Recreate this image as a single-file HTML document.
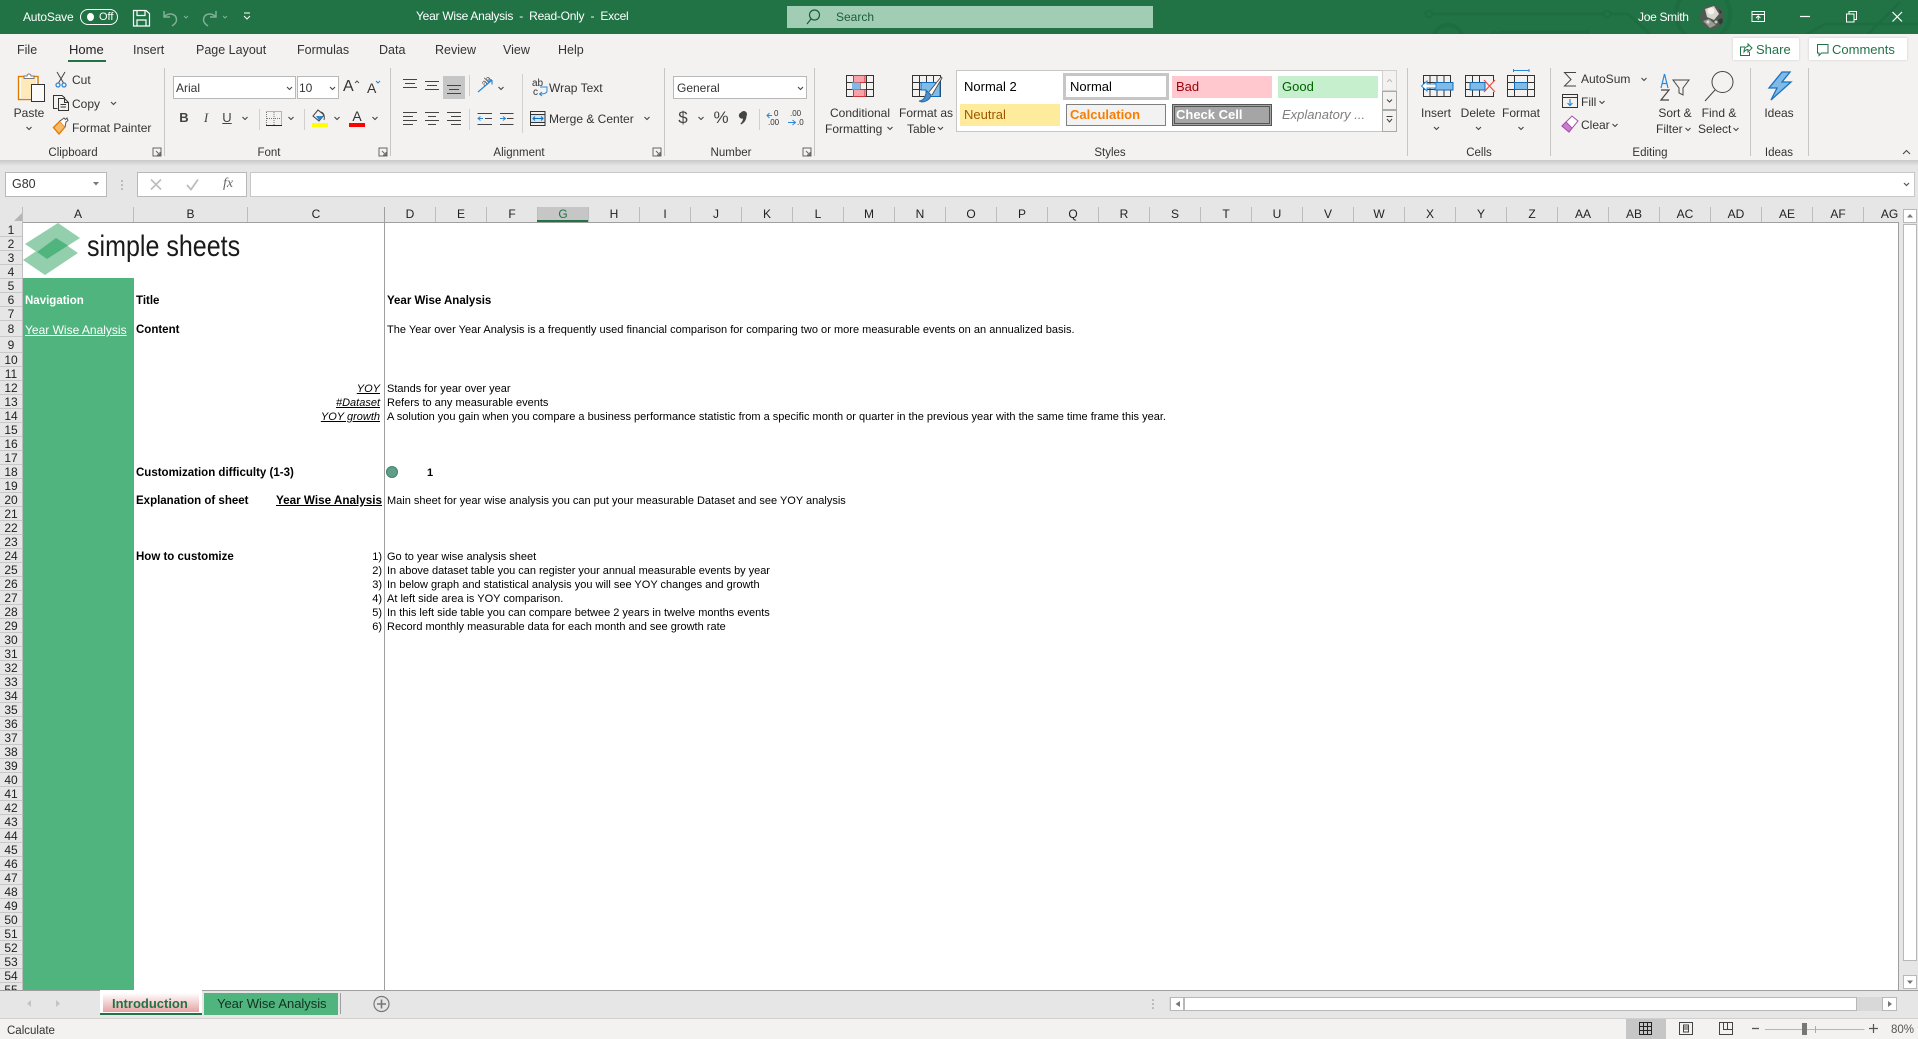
<!DOCTYPE html>
<html lang="en"><head><meta charset="utf-8"><title>Year Wise Analysis - Excel</title>
<style>
html,body{margin:0;padding:0}
body{width:1918px;height:1039px;overflow:hidden;position:relative;background:#fff;font-family:"Liberation Sans",sans-serif;font-size:12px;color:#333}
div,span.a{position:absolute}
.t{position:absolute;white-space:nowrap;line-height:14px;height:14px}
.c{transform:translateX(-50%)}
.r{transform:translateX(-100%)}
.s{font-size:11px;color:#000}
.b{font-weight:bold;font-size:11.5px}
.u{text-decoration:underline}
.m{font-size:12.5px}
.ch{top:207px;height:15px;line-height:15px;text-align:center;font-size:12px;color:#222;width:51px;border-right:1px solid #bdbdbd;box-sizing:border-box;}
.rh{left:0;width:22px;text-align:center;font-size:12px;line-height:14px;height:14px;color:#222;border-bottom:1px solid #c8c8c8;box-sizing:border-box}
.sep{width:1px;background:#c8c6c4;top:68px;height:88px}
.sep2{width:1px;background:#d2d0ce;top:109px;height:21px}
.box{background:#fff;border:1px solid #b8b8b8;box-sizing:border-box}
.st{position:absolute;box-sizing:border-box;font-size:13px;line-height:22px;padding-left:4px;white-space:nowrap;overflow:hidden}
</style></head><body>

<!-- title bar -->
<div style="left:0;top:0;width:1918px;height:34px;background:#217346"></div>
<svg style="position:absolute;left:0;top:0" width="1918" height="34" fill="none" stroke="#1e6c41">
<path stroke-width="3" d="M1432 14H1604M1610 14H1628L1650 34M1807 34L1825 24H1918M1868 34L1900 2"/>
<circle cx="1429" cy="14" r="3.5" stroke-width="2"/><circle cx="1607" cy="14" r="3.5" stroke-width="2"/>
<circle cx="1703" cy="14" r="27" stroke-width="4"/><circle cx="1448" cy="40" r="15" stroke-width="4"/><circle cx="1495" cy="36" r="4" stroke-width="2"/>
<path stroke-width="3" d="M1499 32H1590"/>
</svg>
<span class="t" style="left:23px;top:10px;color:#fff;letter-spacing:-.2px">AutoSave</span>
<div style="left:80px;top:9px;width:38px;height:16px;border:1.5px solid #fff;border-radius:9px;box-sizing:border-box"></div>
<div style="left:87px;top:13px;width:7px;height:8px;border-radius:50%;background:#fff"></div>
<span class="t" style="left:99px;top:10px;color:#fff;font-size:11px">Off</span>
<span class="t" style="left:416px;top:9px;color:#fff;white-space:pre;letter-spacing:-.25px">Year Wise Analysis  -  Read-Only  -  Excel</span>
<div style="left:787px;top:6px;width:366px;height:22px;background:#a0cdb4"></div>
<span class="t" style="left:836px;top:10px;color:#1d5c39;font-size:12px">Search</span>
<span class="t" style="left:1638px;top:10px;color:#fff;letter-spacing:-.3px">Joe Smith</span>

<!-- ribbon -->
<div style="left:0;top:34px;width:1918px;height:126px;background:#f3f2f1"></div>
<span class="t m" style="left:17px;top:43px">File</span>
<span class="t" style="left:69px;top:43px;color:#222;font-size:13px">Home</span>
<div style="left:68px;top:60px;width:38px;height:2px;background:#217346"></div>
<span class="t m" style="left:133px;top:43px">Insert</span>
<span class="t m" style="left:196px;top:43px">Page Layout</span>
<span class="t m" style="left:297px;top:43px">Formulas</span>
<span class="t m" style="left:379px;top:43px">Data</span>
<span class="t m" style="left:435px;top:43px">Review</span>
<span class="t m" style="left:503px;top:43px">View</span>
<span class="t m" style="left:558px;top:43px">Help</span>
<div style="left:1733px;top:38px;width:66px;height:22px;background:#fff;box-shadow:0 0 2px #c8c6c4"></div>
<span class="t" style="left:1756px;top:43px;color:#217346;font-size:13px">Share</span>
<div style="left:1809px;top:38px;width:98px;height:22px;background:#fff;box-shadow:0 0 2px #c8c6c4"></div>
<span class="t" style="left:1832px;top:43px;color:#217346;font-size:13px">Comments</span>

<!-- separators -->
<div class="sep" style="left:164px"></div><div class="sep" style="left:390px"></div><div class="sep" style="left:664px"></div><div class="sep" style="left:814px"></div><div class="sep" style="left:1407px"></div><div class="sep" style="left:1550px"></div><div class="sep" style="left:1750px"></div><div class="sep" style="left:1808px"></div>
<div class="sep2" style="left:259px"></div><div class="sep2" style="left:304px"></div><div class="sep2" style="left:469px"></div><div class="sep2" style="left:469px;top:75px"></div><div class="sep2" style="left:522px;top:74px;height:59px"></div><div class="sep2" style="left:759px"></div>

<!-- clipboard -->
<span class="t c" style="left:29px;top:106px">Paste</span>
<span class="t" style="left:72px;top:73px">Cut</span>
<span class="t" style="left:72px;top:97px">Copy</span>
<span class="t" style="left:72px;top:121px">Format Painter</span>
<span class="t c" style="left:73px;top:146px;font-size:11.5px">Clipboard</span>
<!-- font -->
<div class="box" style="left:173px;top:76px;width:123px;height:23px"></div>
<span class="t" style="left:176px;top:81px">Arial</span>
<div class="box" style="left:297px;top:76px;width:42px;height:23px"></div>
<span class="t" style="left:299px;top:81px">10</span>
<span class="t" style="left:343px;top:79px;font-size:16px;line-height:16px;height:16px">A</span>
<span class="t" style="left:367px;top:81px;font-size:14px">A</span>
<span class="t c" style="left:184px;top:111px;font-size:13px;font-weight:bold;color:#444">B</span>
<span class="t c" style="left:206px;top:111px;font-size:13px;font-style:italic;font-family:'Liberation Serif',serif;color:#444">I</span>
<span class="t c" style="left:227px;top:111px;font-size:13px;color:#444;text-decoration:underline">U</span>
<span class="t c" style="left:357px;top:109px;font-size:14px;color:#333">A</span>
<span class="t c" style="left:269px;top:146px;font-size:11.5px">Font</span>
<!-- alignment -->
<div style="left:443px;top:76px;width:22px;height:23px;background:#c6c6c6"></div>
<span class="t" style="left:481px;top:74px;font-size:9px;color:#555;transform:rotate(-45deg)">ab</span>
<span class="t" style="left:549px;top:81px">Wrap Text</span>
<span class="t" style="left:549px;top:112px">Merge &amp; Center</span>
<span class="t" style="left:532px;top:79px;font-size:10px;line-height:9px">ab</span>
<span class="t" style="left:533px;top:88px;font-size:10px;line-height:9px">c</span>
<span class="t c" style="left:519px;top:146px;font-size:11.5px">Alignment</span>
<!-- number -->
<div class="box" style="left:673px;top:76px;width:134px;height:23px"></div>
<span class="t" style="left:677px;top:81px">General</span>
<span class="t c" style="left:683px;top:109px;font-size:17px;line-height:18px;height:18px;color:#444">$</span>
<span class="t c" style="left:721px;top:109px;font-size:17px;line-height:18px;height:18px;color:#444">%</span>
<span class="t" style="left:774px;top:109px;font-size:8px;line-height:9px">0</span>
<span class="t" style="left:768px;top:118px;font-size:8px;line-height:9px">.00</span>
<span class="t" style="left:790px;top:109px;font-size:8px;line-height:9px">.00</span>
<span class="t" style="left:797px;top:118px;font-size:8px;line-height:9px">.0</span>
<span class="t c" style="left:731px;top:146px;font-size:11.5px">Number</span>
<!-- styles big buttons -->
<span class="t c" style="left:860px;top:106px">Conditional</span>
<span class="t" style="left:825px;top:122px">Formatting</span>
<span class="t c" style="left:926px;top:106px">Format as</span>
<span class="t" style="left:907px;top:122px">Table</span>
<span class="t c" style="left:1110px;top:146px;font-size:11.5px">Styles</span>
<!-- gallery -->
<div style="left:956px;top:70px;width:441px;height:62px;background:#fff;border:1px solid #c8c6c4;box-sizing:border-box"></div>
<div class="st" style="left:960px;top:76px;width:100px;height:22px;color:#000">Normal 2</div>
<div class="st" style="left:1063px;top:73px;width:106px;height:27px;border:3px solid #c6c6c6;color:#000;line-height:21px;padding-left:4px">Normal</div>
<div class="st" style="left:1172px;top:76px;width:100px;height:22px;background:#ffc7ce;color:#9c0006">Bad</div>
<div class="st" style="left:1278px;top:76px;width:100px;height:22px;background:#c6efce;color:#006100">Good</div>
<div class="st" style="left:960px;top:104px;width:100px;height:22px;background:#ffeb9c;color:#9c5700">Neutral</div>
<div class="st" style="left:1066px;top:104px;width:100px;height:22px;background:#f2f2f2;border:1px solid #7f7f7f;color:#fa7d00;font-weight:bold;line-height:20px;padding-left:3px">Calculation</div>
<div class="st" style="left:1172px;top:104px;width:100px;height:22px;background:#a5a5a5;border:3px double #555;color:#fff;font-weight:bold;line-height:16px;padding-left:1px">Check Cell</div>
<div class="st" style="left:1278px;top:104px;width:100px;height:22px;color:#7f7f7f;font-style:italic">Explanatory ...</div>
<div style="left:1382px;top:70px;width:15px;height:21px;background:#f3f2f1;border:1px solid #d2d0ce;box-sizing:border-box"></div>
<div style="left:1382px;top:91px;width:15px;height:19px;background:#f3f2f1;border:1px solid #aaa;box-sizing:border-box"></div>
<div style="left:1382px;top:110px;width:15px;height:22px;background:#f3f2f1;border:1px solid #aaa;box-sizing:border-box"></div>
<!-- cells -->
<span class="t c" style="left:1436px;top:106px">Insert</span>
<span class="t c" style="left:1478px;top:106px">Delete</span>
<span class="t c" style="left:1521px;top:106px">Format</span>
<span class="t c" style="left:1479px;top:146px;font-size:11.5px">Cells</span>
<!-- editing -->
<span class="t" style="left:1581px;top:72px">AutoSum</span>
<span class="t" style="left:1581px;top:95px">Fill</span>
<span class="t" style="left:1581px;top:118px">Clear</span>
<span class="t c" style="left:1675px;top:106px">Sort &amp;</span>
<span class="t" style="left:1656px;top:122px">Filter</span>
<span class="t c" style="left:1719px;top:106px">Find &amp;</span>
<span class="t" style="left:1698px;top:122px">Select</span>
<span class="t c" style="left:1650px;top:146px;font-size:11.5px">Editing</span>
<span class="t c" style="left:1779px;top:106px">Ideas</span>
<span class="t c" style="left:1779px;top:146px;font-size:11.5px">Ideas</span>

<!-- shadow + formula bar -->
<div style="left:0;top:160px;width:1918px;height:47px;background:#e6e6e6"></div>
<div style="left:0;top:160px;width:1918px;height:6px;background:linear-gradient(#c9c9c9,#e6e6e6)"></div>
<div class="box" style="left:5px;top:172px;width:102px;height:25px;background:#fff"></div>
<span class="t" style="left:12px;top:177px;font-size:12.5px">G80</span>
<div class="box" style="left:137px;top:172px;width:110px;height:25px"></div>
<div class="box" style="left:250px;top:172px;width:1665px;height:25px;border-color:#c8c8c8"></div>
<span class="t c" style="left:228px;top:176px;font-style:italic;font-family:'Liberation Serif',serif;font-size:14px;line-height:16px;color:#666">fx</span>

<!-- column header band -->
<div style="left:0;top:207px;width:1918px;height:15px;background:#e6e6e6"></div>
<div style="left:537px;top:207px;width:51px;height:15px;background:#c6c6c6"></div>
<div class="ch" style="left:23px;width:111px">A</div>
<div class="ch" style="left:134px;width:114px">B</div>
<div class="ch" style="left:248px;width:137px">C</div>
<div class="ch" style="left:385px">D</div><div class="ch" style="left:436px">E</div><div class="ch" style="left:487px">F</div><div class="ch" style="left:538px;color:#217346">G</div><div class="ch" style="left:589px">H</div><div class="ch" style="left:640px">I</div><div class="ch" style="left:691px">J</div><div class="ch" style="left:742px">K</div><div class="ch" style="left:793px">L</div><div class="ch" style="left:844px">M</div><div class="ch" style="left:895px">N</div><div class="ch" style="left:946px">O</div><div class="ch" style="left:997px">P</div><div class="ch" style="left:1048px">Q</div><div class="ch" style="left:1099px">R</div><div class="ch" style="left:1150px">S</div><div class="ch" style="left:1201px">T</div><div class="ch" style="left:1252px">U</div><div class="ch" style="left:1303px">V</div><div class="ch" style="left:1354px">W</div><div class="ch" style="left:1405px">X</div><div class="ch" style="left:1456px">Y</div><div class="ch" style="left:1507px">Z</div><div class="ch" style="left:1558px">AA</div><div class="ch" style="left:1609px">AB</div><div class="ch" style="left:1660px">AC</div><div class="ch" style="left:1711px">AD</div><div class="ch" style="left:1762px">AE</div><div class="ch" style="left:1813px">AF</div><div class="ch" style="left:1864px;border:0">AG</div>
<div style="left:537px;top:220px;width:51px;height:2px;background:#217346"></div>
<div style="left:0;top:222px;width:1898px;height:1px;background:#9f9f9f"></div>

<!-- row headers -->
<div style="left:0;top:222px;width:22px;height:768px;background:#e6e6e6"></div>
<div style="left:22px;top:207px;width:1px;height:783px;background:#bdbdbd"></div>
<div class="rh" style="top:223px">1</div><div class="rh" style="top:237px">2</div><div class="rh" style="top:251px">3</div><div class="rh" style="top:265px">4</div><div class="rh" style="top:279px">5</div><div class="rh" style="top:293px">6</div><div class="rh" style="top:307px">7</div><div class="rh" style="top:321px;height:16px;line-height:16px">8</div><div class="rh" style="top:337px;height:16px;line-height:16px">9</div><div class="rh" style="top:353px">10</div><div class="rh" style="top:367px">11</div><div class="rh" style="top:381px">12</div><div class="rh" style="top:395px">13</div><div class="rh" style="top:409px">14</div><div class="rh" style="top:423px">15</div><div class="rh" style="top:437px">16</div><div class="rh" style="top:451px">17</div><div class="rh" style="top:465px">18</div><div class="rh" style="top:479px">19</div><div class="rh" style="top:493px">20</div><div class="rh" style="top:507px">21</div><div class="rh" style="top:521px">22</div><div class="rh" style="top:535px">23</div><div class="rh" style="top:549px">24</div><div class="rh" style="top:563px">25</div><div class="rh" style="top:577px">26</div><div class="rh" style="top:591px">27</div><div class="rh" style="top:605px">28</div><div class="rh" style="top:619px">29</div><div class="rh" style="top:633px">30</div><div class="rh" style="top:647px">31</div><div class="rh" style="top:661px">32</div><div class="rh" style="top:675px">33</div><div class="rh" style="top:689px">34</div><div class="rh" style="top:703px">35</div><div class="rh" style="top:717px">36</div><div class="rh" style="top:731px">37</div><div class="rh" style="top:745px">38</div><div class="rh" style="top:759px">39</div><div class="rh" style="top:773px">40</div><div class="rh" style="top:787px">41</div><div class="rh" style="top:801px">42</div><div class="rh" style="top:815px">43</div><div class="rh" style="top:829px">44</div><div class="rh" style="top:843px">45</div><div class="rh" style="top:857px">46</div><div class="rh" style="top:871px">47</div><div class="rh" style="top:885px">48</div><div class="rh" style="top:899px">49</div><div class="rh" style="top:913px">50</div><div class="rh" style="top:927px">51</div><div class="rh" style="top:941px">52</div><div class="rh" style="top:955px">53</div><div class="rh" style="top:969px">54</div><div class="rh" style="top:983px;height:7px;overflow:hidden;border:0">55</div>

<!-- sheet -->
<div style="left:23px;top:278px;width:111px;height:712px;background:#4fb47e"></div>
<div style="left:384px;top:207px;width:1px;height:783px;background:#9f9f9f"></div>
<div style="left:1898px;top:222px;width:1px;height:768px;background:#9f9f9f"></div>
<svg style="position:absolute;left:0;top:0" width="90" height="282">
<polygon points="25,244 58,223 80,238 47,259" fill="#93cfac"/>
<polygon points="23,260 56,238 78,253 45,275" fill="#93cfac"/>
<polygon points="37,252 56,238 68,245.5 47,259" fill="#4fb47e"/>
</svg>
<span class="t" style="left:87px;top:229px;height:36px;line-height:36px;font-size:30px;color:#1a1a1a;transform:scaleX(.835);transform-origin:0 0">simple sheets</span>

<span class="t s b" style="left:25px;top:294px;color:#fff">Navigation</span>
<span class="t s u" style="left:25px;top:323px;color:#fff;font-size:12px">Year Wise Analysis</span>
<span class="t s b" style="left:136px;top:294px">Title</span>
<span class="t s b" style="left:136px;top:323px">Content</span>
<span class="t s b" style="left:136px;top:466px">Customization difficulty (1-3)</span>
<span class="t s b" style="left:136px;top:494px">Explanation of sheet</span>
<span class="t s b" style="left:136px;top:550px">How to customize</span>
<span class="t s b" style="left:387px;top:294px">Year Wise Analysis</span>
<span class="t s" style="left:387px;top:323px;letter-spacing:.02px">The Year over Year Analysis is a frequently used financial comparison for comparing two or more measurable events on an annualized basis.</span>
<span class="t s u r" style="left:380px;top:382px;font-style:italic">YOY</span>
<span class="t s u r" style="left:380px;top:396px;font-style:italic">#Dataset</span>
<span class="t s u r" style="left:380px;top:410px;font-style:italic">YOY growth</span>
<span class="t s" style="left:387px;top:382px">Stands for year over year</span>
<span class="t s" style="left:387px;top:396px">Refers to any measurable events</span>
<span class="t s" style="left:387px;top:410px">A solution you gain when you compare a business performance statistic from a specific month or quarter in the previous year with the same time frame this year.</span>
<div style="left:386px;top:466px;width:12px;height:12px;border-radius:50%;background:#5f9e88;border:1px solid #41836d;box-sizing:border-box"></div>
<span class="t s c" style="left:430px;top:466px;font-weight:bold">1</span>
<span class="t s b u r" style="left:382px;top:494px;font-size:11.7px">Year Wise Analysis</span>
<span class="t s" style="left:387px;top:494px">Main sheet for year wise analysis you can put your measurable Dataset and see YOY analysis</span>
<span class="t s r" style="left:382px;top:550px">1)</span><span class="t s" style="left:387px;top:550px">Go to year wise analysis sheet</span>
<span class="t s r" style="left:382px;top:564px">2)</span><span class="t s" style="left:387px;top:564px;letter-spacing:-.03px">In above dataset table you can register your annual measurable events by year</span>
<span class="t s r" style="left:382px;top:578px">3)</span><span class="t s" style="left:387px;top:578px">In below graph and statistical analysis you will see YOY changes and growth</span>
<span class="t s r" style="left:382px;top:592px">4)</span><span class="t s" style="left:387px;top:592px">At left side area is YOY comparison.</span>
<span class="t s r" style="left:382px;top:606px">5)</span><span class="t s" style="left:387px;top:606px">In this left side table you can compare betwee 2 years in twelve months events</span>
<span class="t s r" style="left:382px;top:620px">6)</span><span class="t s" style="left:387px;top:620px">Record monthly measurable data for each month and see growth rate</span>

<!-- v scrollbar -->
<div style="left:1899px;top:207px;width:19px;height:783px;background:#e6e6e6"></div>
<div class="box" style="left:1903px;top:209px;width:14px;height:14px"></div>
<div class="box" style="left:1903px;top:224px;width:14px;height:737px"></div>
<div class="box" style="left:1903px;top:975px;width:14px;height:14px"></div>

<!-- tab bar -->
<div style="left:0;top:990px;width:1918px;height:28px;background:#e6e6e6;border-top:1px solid #9f9f9f;box-sizing:border-box"></div>
<div style="left:100px;top:990px;width:102px;height:25px;background:#fff"></div>
<div style="left:103px;top:993px;width:96px;height:19px;background:linear-gradient(#fff,#e6a3a3)"></div>
<div style="left:100px;top:1013px;width:102px;height:2px;background:#217346"></div>
<span class="t" style="left:112px;top:997px;color:#217346;font-size:13px;font-weight:bold">Introduction</span>
<div style="left:204px;top:993px;width:134px;height:22px;background:#4fb47e"></div>
<span class="t" style="left:217px;top:997px;color:#12331f;font-size:13px;letter-spacing:-.03px">Year Wise Analysis</span>
<div style="left:340px;top:993px;width:1px;height:21px;background:#9f9f9f"></div>
<div style="left:1169px;top:997px;width:728px;height:14px;background:#d8d8d8"></div>
<div class="box" style="left:1170px;top:997px;width:14px;height:14px"></div>
<div class="box" style="left:1184px;top:997px;width:673px;height:14px"></div>
<div class="box" style="left:1882px;top:997px;width:15px;height:14px"></div>

<!-- status bar -->
<div style="left:0;top:1018px;width:1918px;height:21px;background:#f3f2f1;border-top:1px solid #d2d0ce;box-sizing:border-box"></div>
<span class="t" style="left:7px;top:1024px;font-size:11.5px">Calculate</span>
<div style="left:1626px;top:1019px;width:40px;height:20px;background:#c6c6c6"></div>
<span class="t" style="left:1891px;top:1023px;font-size:11.5px;color:#555">80%</span>

<!-- icons overlay -->
<svg style="position:absolute;left:0;top:0;pointer-events:none" width="1918" height="1039" fill="none" stroke="#444" stroke-width="1">
<defs><path id="c" d="M-2.5 -1L0 1.5L2.5 -1" stroke="#444" stroke-width="1.1" fill="none"/>
<g id="l" stroke="#666" fill="none"><rect x="-4" y="-4" width="8" height="8"/><path d="M-1 -1L3 3M0 3H3V0" stroke-width="1"/></g></defs>

<!-- QAT -->
<g stroke="#fff" stroke-width="1.2"><path d="M133.5 10.5H146L149.5 13.5V26H133.5ZM137 10.5V15.5H145V10.5M137 26V20H146V26"/></g>
<g stroke="#7fb095" stroke-width="1.5"><path d="M164 11V17H170M164.5 16.5C168 12.5 176.5 13 176.5 20C176.5 22 175 24 172 26"/><path d="M216 11V17H210M215.5 16.5C212 12.5 203.5 13 203.5 20C203.5 22 205 24 208 26"/><path d="M184 16l2 2l2 -2M223 16l2 2l2 -2" stroke-width="1"/></g>
<path d="M244 13H250M244 16L247 19L250 16" stroke="#fff"/>
<!-- search icon -->
<circle cx="814.5" cy="15" r="5" stroke="#1d5c39" stroke-width="1.2"/><path d="M811 19L807 24" stroke="#1d5c39" stroke-width="1.2"/>
<!-- avatar -->
<circle cx="1712" cy="17" r="12" fill="#4e5a50" stroke="none"/><path d="M1705 9L1714 6L1719 14L1714 20L1707 17Z" fill="#d9d5cf" stroke="none"/><circle cx="1711" cy="11" r="3.5" fill="#f4f1ea" stroke="none"/><path d="M1703 21L1709 19L1716 25L1710 28Z" fill="#9a9c92" stroke="none"/><path d="M1718 20l4 -2l1 4l-3 3zM1719 9l3 3l-2 2z" fill="#2f3a32" stroke="none"/><circle cx="1708" cy="22" r="1.5" fill="#ddd" stroke="none"/><circle cx="1716" cy="22" r="1.5" fill="#c9c9bd" stroke="none"/>
<!-- window buttons -->
<g stroke="#fff"><path d="M1752 11.5H1764.5V21.5H1752ZM1752 14.5H1764.5M1758.2 20V16M1756 18L1758.2 15.8L1760.4 18"/><path d="M1800 16.5H1810" stroke-width="1.2"/><path d="M1846.5 14H1854V22H1846.5ZM1849 14V11.5H1856.5V19.5H1854"/><path d="M1892.5 12L1902 21.5M1902 12L1892.5 21.5" stroke-width="1.2"/></g>
<!-- share comments -->
<g stroke="#217346"><path d="M1745 47H1740.5V55.5H1749.5V52"/><path d="M1744 52C1744 48 1746 46.500 1748 46.500V44L1752 48L1748 52V49.500C1746.500 49.500 1745 50.500 1744 52Z"/><path d="M1817.500 44.500H1828V53H1821.500L1819 55.500V53H1817.500Z"/></g>

<!-- paste -->
<rect x="18.5" y="76.5" width="19.5" height="23" fill="#fff" stroke="#e07b00" stroke-width="1.4"/><path d="M21 78H36V98H21Z" fill="#ffe9b8" stroke="none"/>
<path d="M24 78.5V76H27A2 2 0 0 1 31 76H34V78.5Z" fill="#fff" stroke="#777"/>
<rect x="31.5" y="84.5" width="13" height="17" fill="#fafafa" stroke="#333"/>
<!-- cut -->
<path d="M57 72L63.5 83M65 72L58.5 83" stroke="#444"/><circle cx="58" cy="85" r="2" stroke="#2b88d8" stroke-width="1.3"/><circle cx="64" cy="85" r="2" stroke="#2b88d8" stroke-width="1.3"/>
<!-- copy -->
<path d="M57.5 108.5H53.5V95.5H62L65 98M58.5 98.5H64.5L68.5 102.5V110.5H58.5ZM64.5 98.5V102.5H68.5M60.5 104.5H66M60.5 107H66" stroke="#333"/>
<!-- painter -->
<path d="M53.5 127.5L60 121L65 127L59 134Z" fill="#f6ba6b" stroke="#e07b00" stroke-width="1.3"/><path d="M60 121L64 118L65.5 119.5L67 118L68 120.5L66 122L65 127" fill="#fff" stroke="#555"/>
<use href="#c" x="29" y="128"/><use href="#c" x="113.5" y="103"/>
<use href="#l" x="157" y="152"/><use href="#l" x="383" y="152"/><use href="#l" x="657" y="152"/><use href="#l" x="807" y="152"/>

<!-- font -->
<use href="#c" x="289.5" y="88"/><use href="#c" x="332.5" y="88"/>
<path d="M355 83L357 81L359 83" stroke="#555"/><path d="M376 81L378 83L380 81" stroke="#2b7cd3"/>
<use href="#c" x="245" y="118"/><use href="#c" x="291" y="118"/><use href="#c" x="337" y="118"/><use href="#c" x="375" y="118"/>
<path d="M266.5 111.5H281.5V125" stroke="#777" stroke-dasharray="1 1"/><path d="M266.5 112V125M274 112V125M267 118.5H281" stroke="#777" stroke-dasharray="1 1"/><path d="M266 125.5H282" stroke="#222"/>
<path d="M318 110L313 116L319 121L324 115ZM321 112C324 113 325 117 324 120" stroke="#444"/><path d="M316 116H323L319 120.5Z" fill="#2b88d8" stroke="none"/><rect x="312" y="123" width="16" height="4" fill="#ffff00" stroke="none"/>
<rect x="349" y="123" width="16" height="4" fill="#ff0000" stroke="none"/>

<!-- alignment -->
<g stroke="#444"><path d="M403 79.5H417M405 83.5H415M403 87.5H417" /><path d="M425 82.5H439M427 86.5H437M425 90.5H439" transform="translate(0,-1)"/><path d="M447 85.5H461M449 89.5H459M447 93.5H461"/>
<path d="M403 112.5H417M403 116.5H413M403 120.5H417M403 124.5H413"/><path d="M425 112.5H439M428 116.5H436M425 120.5H439M428 124.5H436"/><path d="M447 112.5H461M451 116.5H461M447 120.5H461M451 124.5H461"/>
<path d="M477.500 113.500H492M485 118.500H492M477.500 124.500H492"/><path d="M500 113.500H513.500M507 118.500H513.500M500 124.500H513.500"/></g>
<path d="M483 118.500H478M480.500 116.500L478 118.500L480.500 120.500" stroke="#2b88d8"/>
<path d="M500 118.500H505M503 116.500L505.500 118.500L503 120.500" stroke="#2b88d8"/>
<path d="M478 92L492 80M492 80H487.500M492 80V84.500" stroke="#2b88d8" stroke-width="1.2"/>
<use href="#c" x="501" y="88"/>
<path d="M540 87H547V91C547 93.500 544 94 540 94M542 92L539.500 94L542 96" stroke="#2b88d8"/>
<rect x="530.5" y="111.5" width="14.5" height="14" stroke="#333"/><path d="M530.5 114.5H545M530.5 122.5H545" stroke="#333"/><path d="M531 115H544.5V122H531Z" fill="#cfe5f6" stroke="none"/><path d="M533 118.5H543M535 116.5L533 118.5L535 120.5M541 116.5L543 118.5L541 120.5" stroke="#0f6cbd"/>
<use href="#c" x="647" y="118"/>

<!-- number -->
<use href="#c" x="800.5" y="88"/><use href="#c" x="701" y="118"/>
<path d="M741 112.500A3 3 0 1 1 746.500 116C746.500 120 744 123 741 124.500L740.500 123.500C742 122 743 120.500 743 118.500A3 3 0 0 1 741 112.500Z" fill="#444" stroke="none"/>
<path d="M772 115.5H767M769.5 113L767 115.5L769.5 118" stroke="#2b88d8"/>
<path d="M788 122.5H795M792.5 120L795.5 122.5L792.5 125" stroke="#2b88d8"/>

<!-- conditional -->
<g stroke="#333"><rect x="846.5" y="75.5" width="27" height="21"/><path d="M853.5 75.5V96.5M860 75.5V96.5M866.5 75.5V96.5M846.5 82.5H873.5M846.5 89.5H873.5"/></g>
<path d="M853.5 75.5H865V82.5H853.5ZM853.5 89.5H865V96.5H853.5Z" fill="#f7a1a8" stroke="#d13438"/><rect x="852" y="82.5" width="8" height="7" fill="#7fbbe6" stroke="none"/>
<use href="#c" x="890" y="128"/>
<!-- format table -->
<g stroke="#333"><rect x="912.5" y="75.5" width="28" height="21"/><path d="M919.5 75.5V96.5M926.5 75.5V96.5M933.5 75.5V96.5M912.5 82.5H940.5M912.5 89.5H940.5"/></g>
<path d="M921 82.5H940V96.5H926V90H921Z" fill="#7fbbe6" stroke="#0f6cbd"/>
<path d="M932 95L942 78L941 77L929 92" fill="#fff" stroke="#555"/><path d="M922 102C925 102 930 100 931 95L927 91C925 94 926 100 919 101Z" fill="#4a8ecb" stroke="#2b6ca3"/>
<use href="#c" x="940.5" y="128"/>
<!-- gallery arrows -->
<path d="M1387 82L1389.5 79.5L1392 82" stroke="#bbb"/><path d="M1387 99.5L1389.5 102L1392 99.5" stroke="#444"/><path d="M1386.5 116.5H1392.5M1387 119L1389.5 122L1392 119" stroke="#444"/>
<!-- cells insert -->
<g stroke="#333"><rect x="1423.5" y="75.5" width="27" height="21"/><path d="M1430 75.5V96.5M1437 75.5V96.5M1444 75.5V96.5M1423.5 82.5H1450.5M1423.5 89.5H1450.5"/></g>
<rect x="1435" y="82.5" width="18" height="7.5" fill="#7fbbe6" stroke="#0f6cbd"/><path d="M1421.5 86L1427 81V84H1436V88H1427V91Z" fill="#fff" stroke="#2b88d8"/>
<use href="#c" x="1436.5" y="128"/>
<!-- delete -->
<g stroke="#333"><path d="M1487 75.5H1465.5V96.5H1487M1472.5 75.5V82M1479.5 75.5V82M1472.5 90V96.5M1479.5 90V96.5M1465.5 82.5H1470M1465.5 89.5H1470M1487 75.5H1493.5V82M1487 96.5H1493.5V92"/></g>
<rect x="1470" y="82.5" width="15" height="7.5" fill="#7fbbe6" stroke="#0f6cbd"/><path d="M1484 80L1495 92M1495 80L1484 92" stroke="#e8504a" stroke-width="1.2"/>
<use href="#c" x="1478.5" y="128"/>
<!-- format -->
<g stroke="#333"><rect x="1507.5" y="75.5" width="27" height="21"/><path d="M1514.5 75.5V96.5M1527.5 75.5V96.5M1507.5 82.5H1534.5M1507.5 89.5H1534.5"/></g>
<rect x="1514.5" y="82.5" width="13" height="7" fill="#7fbbe6" stroke="#0f6cbd"/>
<path d="M1513.5 70.5H1529M1513.5 69V72M1529 69V72" stroke="#2b88d8"/>
<use href="#c" x="1521" y="128"/>
<!-- editing -->
<path d="M1576 72.5H1564.5L1571 79.5L1564.5 86H1576" stroke="#444"/>
<use href="#c" x="1644" y="79"/>
<rect x="1562.5" y="94.5" width="15" height="13" stroke="#333"/><path d="M1562.5 97.5H1577.5" stroke="#333"/><path d="M1570 99V105M1567.5 103L1570 105.5L1572.5 103" stroke="#2b88d8" stroke-width="1.2"/><use href="#c" x="1602" y="102"/>
<path d="M1562 126L1572 116L1578 121L1569 132Z" fill="#fff" stroke="#a74dad"/><path d="M1562 126L1566 122L1572 128L1569 132Z" fill="#c77fcc" stroke="#a74dad"/><use href="#c" x="1615" y="125"/>
<path d="M1661 88L1664.5 74L1668 88M1662 83.5H1667" stroke="#2b88d8" stroke-width="1.2"/><path d="M1661 90H1669L1661 100H1669" stroke="#444" stroke-width="1.2"/><path d="M1673 80H1689L1683 88V95L1679 93V88Z" stroke="#444"/>
<use href="#c" x="1688" y="129"/>
<circle cx="1722.5" cy="82" r="10.5" stroke="#444"/><path d="M1715 90L1705 101" stroke="#444"/><use href="#c" x="1736" y="129"/>
<path d="M1782 72L1769 88H1777L1771 100L1791 82H1782L1790 72Z" fill="#7fbbe6" stroke="#1a73c0" stroke-width="1.3"/>
<path d="M1903 154L1906.5 150.5L1910 154" stroke="#444"/>

<!-- formula bar -->
<circle cx="122" cy="181" r=".8" fill="#888" stroke="none"/><circle cx="122" cy="185" r=".8" fill="#888" stroke="none"/><circle cx="122" cy="189" r=".8" fill="#888" stroke="none"/>
<path d="M151 179.5L161 189.5M161 179.5L151 189.5" stroke="#bdbdbd" stroke-width="1.6"/>
<path d="M187 185L191 189.5L198 179.5" stroke="#bdbdbd" stroke-width="1.8"/>
<path d="M93 182L96 185.5L99 182Z" fill="#777" stroke="none"/>
<path d="M1904 183L1906.5 185.5L1909 183" stroke="#555" stroke-width="1.2"/>
<path d="M22 213V221H14Z" fill="#b5b5b5" stroke="none"/>
<!-- scrollbars -->
<path d="M1907 217.5L1910 214L1913 217.5Z" fill="#777" stroke="none"/><path d="M1907 980.5H1913L1910 984Z" fill="#777" stroke="none"/>
<path d="M1180 1001V1007L1175.5 1004Z" fill="#777" stroke="none"/><path d="M1888 1001V1007L1892 1004Z" fill="#777" stroke="none"/>
<circle cx="1153" cy="1000" r=".8" fill="#888" stroke="none"/><circle cx="1153" cy="1004" r=".8" fill="#888" stroke="none"/><circle cx="1153" cy="1008" r=".8" fill="#888" stroke="none"/>
<!-- tab bar -->
<path d="M31 1000V1007L27 1003.5Z" fill="#c4c4c4" stroke="none"/><path d="M56 1000V1007L60 1003.5Z" fill="#c4c4c4" stroke="none"/>
<circle cx="381.5" cy="1004" r="7.5" stroke="#777" stroke-width="1.2"/><path d="M377 1004H386M381.5 999.5V1008.5" stroke="#777" stroke-width="1.6"/>
<!-- status -->
<g stroke="#222"><rect x="1639.5" y="1022.5" width="12" height="12"/><path d="M1643.5 1022.5V1034.5M1647.5 1022.5V1034.5M1639.5 1026.5H1651.5M1639.5 1030.5H1651.5"/></g>
<g stroke="#444"><rect x="1679.5" y="1022.5" width="13" height="12"/><path d="M1683.5 1025H1688.5V1032H1683.5ZM1684 1027H1688M1684 1029H1688"/></g>
<g stroke="#444"><rect x="1719.5" y="1022.5" width="13" height="12"/><path d="M1723.5 1022.5V1029.5H1732M1727.5 1022.5V1029"/></g>
<path d="M1752 1028.5H1759" stroke="#555" stroke-width="1.3"/>
<path d="M1765 1029.5H1864.5" stroke="#b5b5b5"/><path d="M1815.5 1026V1033" stroke="#aaa"/>
<rect x="1802" y="1023" width="5" height="12" fill="#777" stroke="none"/>
<path d="M1869 1028.5H1878M1873.5 1024V1033" stroke="#555" stroke-width="1.2"/>
</svg>
</body></html>
